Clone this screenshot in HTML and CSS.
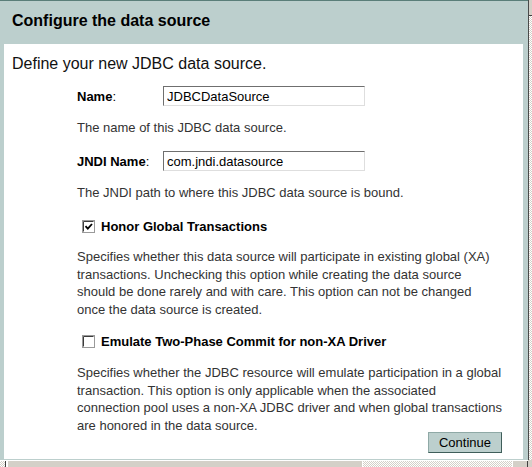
FILE: index.html
```html
<!DOCTYPE html>
<html lang="en">
<head>
    <meta charset="UTF-8">
    <title>Configure the data source</title>
    <link rel="stylesheet" href="styles.css">
</head>
<body>
    <!--Ventana principal-->
    <div class="window">
        <header class="titlebar">
            <h1>Configure the data source</h1>
        </header>

        <main class="panel">
            <p class="intro">Define your new JDBC data source.</p>

            <form class="ds-form">
                <div class="field">
                    <label for="name"><b>Name</b>:</label>
                    <input type="text" id="name" value="JDBCDataSource">
                </div>
                <p class="hint">The name of this JDBC data source.</p>

                <div class="field field-jndi">
                    <label for="jndi"><b>JNDI Name</b>:</label>
                    <input type="text" id="jndi" value="com.jndi.datasource">
                </div>
                <p class="hint">The JNDI path to where this JDBC data source is bound.</p>

                <div class="check check-first">
                    <svg class="box" width="13" height="13" viewBox="0 0 13 13">
                        <rect x="0.5" y="0.5" width="12" height="12" fill="#fff" stroke="#9a9a9a"/>
                        <path d="M1.5 11.5V1.5H11.5" stroke="#3c3c3c" fill="none"/>
                        <path d="M3.5 6.2l2.3 2.4 4.2-4.6" stroke="#000" stroke-width="1.8" fill="none"/>
                    </svg>
                    <span>Honor Global Transactions</span>
                </div>
                <p class="desc">Specifies whether this data source will participate in existing global (XA)<br>
                transactions. Unchecking this option while creating the data source<br>
                should be done rarely and with care. This option can not be changed<br>
                once the data source is created.</p>

                <div class="check check-second">
                    <svg class="box" width="13" height="13" viewBox="0 0 13 13">
                        <rect x="0.5" y="0.5" width="12" height="12" fill="#fff" stroke="#9a9a9a"/>
                        <path d="M1.5 11.5V1.5H11.5" stroke="#3c3c3c" fill="none"/>
                    </svg>
                    <span>Emulate Two-Phase Commit for non-XA Driver</span>
                </div>
                <p class="desc desc-last">Specifies whether the JDBC resource will emulate participation in a global<br>
                transaction. This option is only applicable when the associated<br>
                connection pool uses a non-XA JDBC driver and when global transactions<br>
                are honored in the data source.</p>

                <div class="actions">
                    <button type="button" class="btn">Continue</button>
                </div>
            </form>
        </main>
    </div>

    <!--Barras de desplazamiento-->
    <div class="vscroll"><span class="arrow-up"></span></div>
    <div class="hscroll">
        <span class="thumb"></span>
        <span class="arrow-right"></span>
    </div>
    <div class="corner"></div>
</body>
</html>
```

FILE: styles.css
```css
/*Estilos básicos*/
body {
    margin: 0;
    width: 532px;
    height: 467px;
    overflow: hidden;
    display: grid;
    grid-template-columns: 528px 4px;
    grid-template-rows: 460px 7px;
    font-family: "Liberation Sans", Arial, sans-serif;
    background-color: #d4d0c8;
}

.window {
    border-top: 1px solid #5a7e79;
    background-color: #bccfcd;
    padding: 0 5px 1px 4px;
    display: flex;
    flex-direction: column;
}

.titlebar {
    height: 43px;
}

.titlebar h1 {
    margin: 0;
    padding: 10px 0 0 8px;
    font-size: 16px;
    line-height: 20px;
    font-weight: bold;
    color: #000;
}

.panel {
    flex: 1;
    background-color: #fff;
}

.intro {
    margin: 10px 0 0 8px;
    font-size: 16px;
    line-height: 20px;
    color: #111;
}

.ds-form {
    padding: 0 21px 0 73px;
    font-size: 13px;
}

.field {
    display: flex;
    align-items: center;
    height: 20px;
    margin-top: 12px;
}

.field-jndi {
    margin-top: 15px;
}

.field label {
    width: 86px;
    color: #000;
}

.field input {
    box-sizing: border-box;
    width: 202px;
    height: 20px;
    margin: 0;
    padding: 0 3px;
    border: 1px solid;
    border-color: #6f6f6f #dedede #dedede #6f6f6f;
    font-family: inherit;
    font-size: 13px;
    color: #000;
    outline: none;
}

.hint {
    margin: 13px 0 0;
    line-height: 17px;
    color: #333;
}

.check {
    display: flex;
    align-items: center;
    height: 17px;
    padding-left: 5px;
    gap: 6px;
    font-weight: bold;
    color: #000;
}

.check-first {
    margin-top: 17px;
}

.check-second {
    margin-top: 15px;
}

.check .box {
    flex: none;
}

.desc {
    margin: 13px 0 0;
    line-height: 17.5px;
    color: #333;
    white-space: nowrap;
}

.desc-last {
    margin-top: 14px;
}

.actions {
    display: flex;
    justify-content: flex-end;
    margin-top: -2px;
}

.btn {
    box-sizing: border-box;
    width: 74px;
    height: 21px;
    padding: 0;
    background-color: #bccfcd;
    border: 1px solid;
    border-color: #8fa9a6 #3f5e5a #3f5e5a #8fa9a6;
    font-family: inherit;
    font-size: 13px;
    color: #000;
    cursor: pointer;
}

/*Barras de desplazamiento*/
.vscroll {
    border-left: 1px solid #4a4a4a;
    background: repeating-conic-gradient(#d4d0c8 0 25%, #fff 0 50%) 0 0 / 2px 2px;
    position: relative;
}

.arrow-up {
    display: block;
    height: 15px;
    background-color: #d4d0c8;
    border-bottom: 1px solid #404040;
}

.hscroll {
    border-top: 1px solid #fff;
    background: repeating-conic-gradient(#d4d0c8 0 25%, #fff 0 50%) 0 0 / 2px 2px;
    display: flex;
    justify-content: space-between;
}

.hscroll .thumb {
    width: 356px;
    margin-left: 5px;
    background-color: #d4d0c8;
    border-left: 1px solid #404040;
    border-right: 1px solid #fff;
    box-shadow: inset 2px 0 0 #fff;
}

.hscroll .arrow-right {
    width: 14px;
    background-color: #d4d0c8;
    border-left: 1px solid #fff;
    border-right: 1px solid #404040;
}

.corner {
    background-color: #d4d0c8;
}
```
